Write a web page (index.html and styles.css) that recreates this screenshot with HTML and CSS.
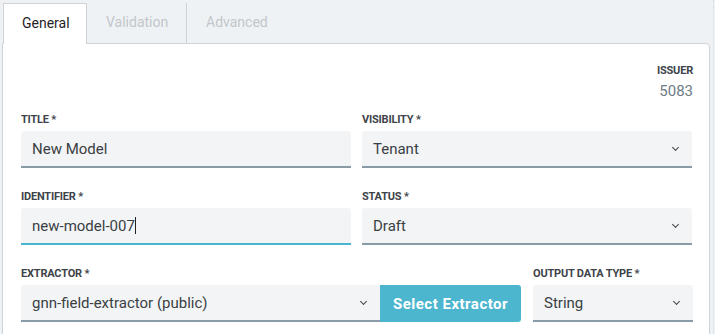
FILE: index.html
```html
<!DOCTYPE html>
<html lang="en">
<head>
    <meta charset="UTF-8">
    <meta name="viewport" content="width=device-width, initial-scale=1.0">
    <title>New Model</title>
    <link rel="stylesheet" href="styles.css">
</head>
<body>
    <div class="page">
        <div class="tabs">
            <div class="tab active">General</div>
            <div class="tab divided">Validation</div>
            <div class="tab">Advanced</div>
        </div>
        <div class="panel">
            <div class="issuer">
                <div class="label">ISSUER</div>
                <div class="issuer-value">5083</div>
            </div>
            <div class="row">
                <div class="field half">
                    <div class="label">TITLE *</div>
                    <div class="control">New Model</div>
                </div>
                <div class="field half">
                    <div class="label">VISIBILITY *</div>
                    <div class="control select">Tenant<span class="chevron"></span></div>
                </div>
            </div>
            <div class="row">
                <div class="field half">
                    <div class="label">IDENTIFIER *</div>
                    <div class="control focused">new-model-007<span class="caret"></span></div>
                </div>
                <div class="field half">
                    <div class="label">STATUS *</div>
                    <div class="control select">Draft<span class="chevron"></span></div>
                </div>
            </div>
            <div class="row">
                <div class="field extractor">
                    <div class="label">EXTRACTOR *</div>
                    <div class="group">
                        <div class="control select joined">gnn-field-extractor (public)<span class="chevron"></span></div>
                        <button class="pick">Select Extractor</button>
                    </div>
                </div>
                <div class="field output">
                    <div class="label">OUTPUT DATA TYPE *</div>
                    <div class="control select">String<span class="chevron"></span></div>
                </div>
            </div>
        </div>
    </div>
</body>
</html>
```

FILE: styles.css
```css
body {
    margin: 0;
    background-color: #eff2f5;
    font-family: Roboto, "Liberation Sans", sans-serif;
    color: #3a3f44;
    overflow: hidden;
}
.page {
    width: 713px;
    height: 334px;
    border-right: 1px dotted #d4d8dc;
}
.tabs {
    display: flex;
    height: 40px;
    padding: 3px 0 0 3px;
}
.tab {
    height: 40px;
    box-sizing: border-box;
    padding: 0 19px;
    line-height: 39px;
    font-size: 14px;
    color: #c2c6cb;
}
.tab.divided {
    border-right: 1px solid #cfd3d7;
}
.tab.active {
    width: 84px;
    padding-left: 18px;
    border: 1px solid #cfd3d7;
    border-bottom: none;
    background-color: #fff;
    color: #1f2326;
    position: relative;
    z-index: 1;
    height: 41px;
}
.tab:nth-child(2) {
    width: 100px;
}
.panel {
    margin-left: 2px;
    width: 708px;
    height: 300px;
    box-sizing: border-box;
    border: 1px solid #cfd3d7;
    border-radius: 0 4px 0 0;
    background-color: #fff;
    padding: 20px 16px 0 18px;
}
.label {
    font-size: 11px;
    line-height: 13px;
    font-weight: 700;
    letter-spacing: -0.2px;
    color: #3d4349;
}
.issuer {
    text-align: right;
    margin-bottom: 13px;
}
.issuer-value {
    font-size: 15px;
    line-height: 18px;
    margin-top: 5px;
    color: #6e7b87;
}
.row {
    display: flex;
    gap: 11px;
    margin-bottom: 22px;
}
.field .label {
    margin-bottom: 5px;
}
.half {
    width: 330px;
}
.extractor {
    width: 500px;
}
.output {
    width: 160px;
}
.row:last-child {
    gap: 12px;
}
.control {
    position: relative;
    height: 37px;
    box-sizing: border-box;
    padding: 0 11px;
    line-height: 36px;
    font-size: 15px;
    background-color: #f3f4f6;
    border-bottom: 2px solid #8a9ba8;
    border-radius: 3px 3px 0 0;
    color: #3a3f44;
}
.control.focused {
    border-bottom-color: #4ab5d0;
}
.caret {
    display: inline-block;
    width: 1px;
    height: 17px;
    background-color: #222;
    vertical-align: -3px;
}
.chevron {
    position: absolute;
    right: 14px;
    top: 14px;
    width: 4px;
    height: 4px;
    border-right: 1.3px solid #444;
    border-bottom: 1.3px solid #444;
    transform: rotate(45deg);
}
.group {
    display: flex;
}
.control.joined {
    flex: 1;
    border-radius: 3px 0 0 0;
}
.pick {
    width: 141px;
    height: 37px;
    border: none;
    border-radius: 0 3px 3px 0;
    background-color: #4db6cf;
    color: #fff;
    font-family: Roboto, "Liberation Sans", sans-serif;
    font-size: 15px;
    font-weight: 700;
    letter-spacing: 0.5px;
    padding: 0;
}
```
